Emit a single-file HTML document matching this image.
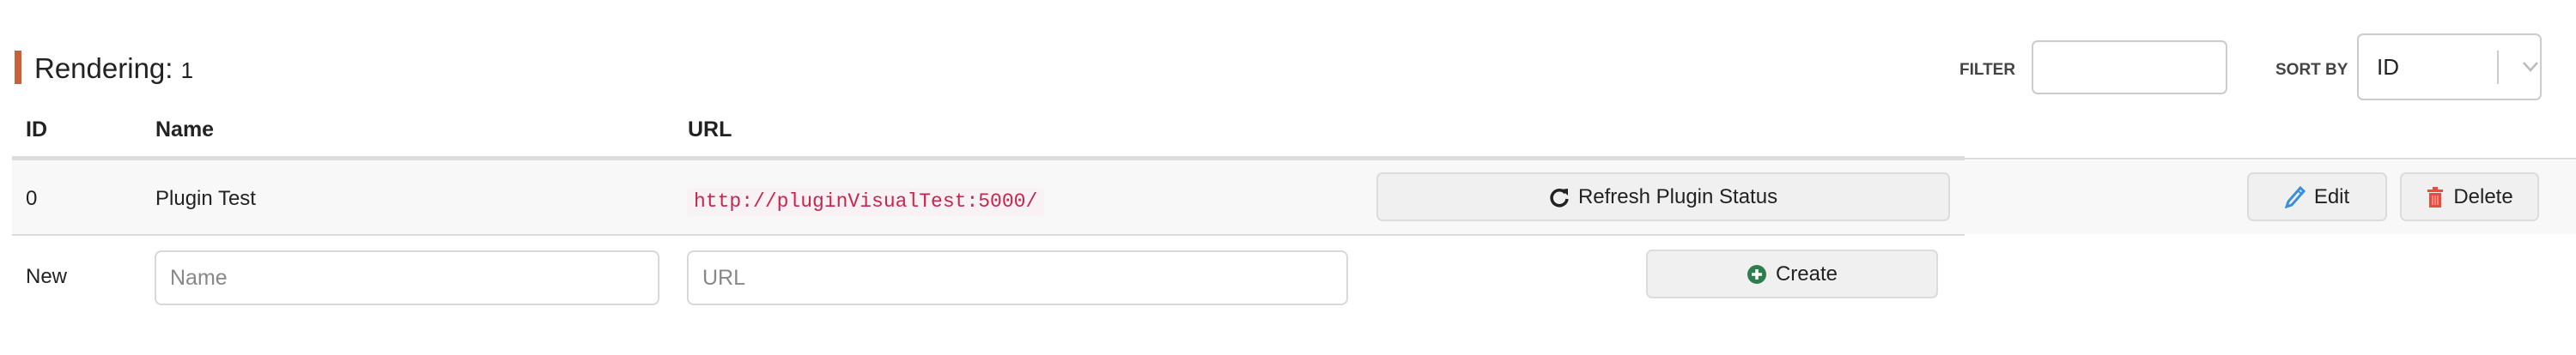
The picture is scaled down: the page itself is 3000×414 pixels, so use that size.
<!DOCTYPE html>
<html><head><meta charset="utf-8"><style>
*{box-sizing:border-box;margin:0;padding:0}
body{width:3000px;height:414px;background:#fff;font-family:"Liberation Sans",sans-serif;color:#222;position:relative;overflow:hidden}
.a{position:absolute}
.btn{position:absolute;background:#f0f0f0;border:2px solid #dcdcdc;border-radius:7px;display:flex;align-items:center;justify-content:center;font-size:24px;color:#222;gap:10px}
.inp{position:absolute;border:2px solid #d8d8d8;border-radius:8px;background:#fff;font-size:25px;color:#888;padding-left:16px;display:flex;align-items:center}
.th{position:absolute;top:137px;font-size:25px;font-weight:bold;color:#222}
.td{position:absolute;font-size:24px;color:#222}
</style></head><body>
<div class="a" style="left:17px;top:59px;width:8px;height:39px;background:#c8603a"></div>
<div class="a" style="left:40px;top:61px;font-size:33px;color:#222">Rendering: <span style="font-size:26px">1</span></div>

<div class="a" style="left:2282px;top:71px;font-size:19px;font-weight:bold;color:#444">FILTER</div>
<div class="a" style="left:2366px;top:47px;width:228px;height:63px;border:2px solid #ccc;border-radius:7px"></div>
<div class="a" style="left:2650px;top:71px;font-size:19px;font-weight:bold;color:#444">SORT BY</div>
<div class="a" style="left:2745px;top:39px;width:215px;height:78px;border:2px solid #ccc;border-radius:7px"></div>
<div class="a" style="left:2768px;top:63px;font-size:26px;color:#222">ID</div>
<div class="a" style="left:2908px;top:59px;width:2px;height:39px;background:#ccc"></div>
<svg class="a" style="left:2936px;top:70px" width="22" height="16" viewBox="0 0 22 16"><path d="M3 3 L11 12 L19 3" fill="none" stroke="#bbb" stroke-width="2.5"/></svg>

<div class="th" style="left:30px">ID</div>
<div class="th" style="left:181px">Name</div>
<div class="th" style="left:801px">URL</div>

<div class="a" style="left:14px;top:182px;width:2274px;height:5px;background:#dcdcdc"></div>
<div class="a" style="left:2288px;top:184px;width:712px;height:2px;background:#dcdcdc"></div>
<div class="a" style="left:14px;top:187px;width:2986px;height:86px;background:#f8f8f8"></div>
<div class="a" style="left:14px;top:273px;width:2274px;height:2px;background:#dcdcdc"></div>

<div class="td" style="left:30px;top:218px">0</div>
<div class="td" style="left:181px;top:218px">Plugin Test</div>
<div class="a" style="left:800px;top:219px;height:33px;padding:0 8px;background:#f9f2f4;border-radius:4px;font-family:'Liberation Mono',monospace;font-size:23px;color:#c7254e;line-height:33px">http://pluginVisualTest:5000/</div>

<div class="btn" style="left:1603px;top:201px;width:668px;height:57px">
<svg width="24" height="26" viewBox="0 0 24 26"><path d="M19 8 A9 9 0 1 0 21 15" fill="none" stroke="#222" stroke-width="3.5"/><path d="M14 4 L22 3 L22 11 Z" fill="#222"/></svg>Refresh Plugin Status</div>
<div class="btn" style="left:2617px;top:201px;width:163px;height:57px">
<svg width="24" height="26" viewBox="0 0 24 26"><path d="M18 2 L22 6 L8 22 L2 24 L4 18 Z" fill="none" stroke="#3a8fd8" stroke-width="3"/><path d="M15 5 L19 9" stroke="#3a8fd8" stroke-width="2"/></svg>Edit</div>
<div class="btn" style="left:2795px;top:201px;width:162px;height:57px">
<svg width="22" height="26" viewBox="0 0 22 26"><rect x="2" y="4" width="18" height="3" fill="#e84c3d"/><rect x="8" y="1" width="6" height="3" fill="#e84c3d"/><rect x="4" y="8" width="14" height="17" fill="#e84c3d"/><path d="M8 11V22M11 11V22M14 11V22" stroke="#fbb" stroke-width="1"/></svg>Delete</div>

<div class="td" style="left:30px;top:309px">New</div>
<div class="inp" style="left:180px;top:292px;width:588px;height:64px">Name</div>
<div class="inp" style="left:800px;top:292px;width:770px;height:64px">URL</div>
<div class="btn" style="left:1917px;top:291px;width:340px;height:57px">
<svg width="24" height="24" viewBox="0 0 24 24"><circle cx="12" cy="12" r="11" fill="#2e7d4f"/><path d="M12 6V18M6 12H18" stroke="#fff" stroke-width="3.5"/></svg>Create</div>
</body></html>
